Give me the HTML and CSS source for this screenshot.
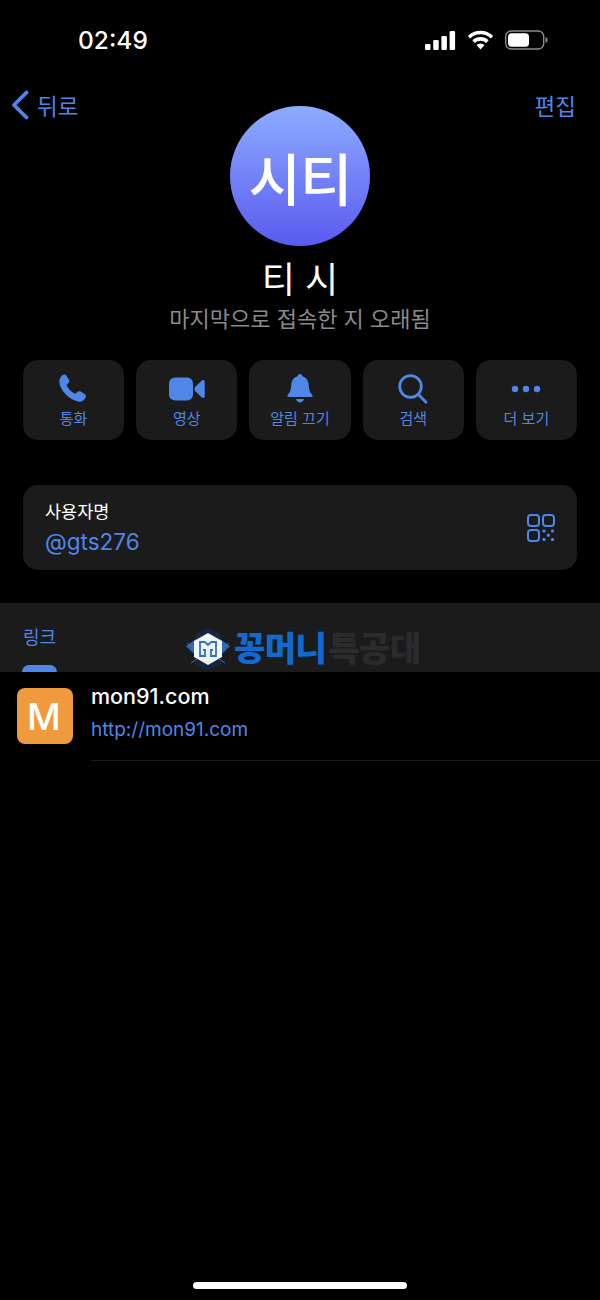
FILE: index.html
```html
<!DOCTYPE html>
<html lang="ko">
<head>
    <meta charset="UTF-8">
    <meta name="viewport" content="width=device-width, initial-scale=1.0">
    <title>티 시</title>
    <link rel="stylesheet" href="styles.css">
</head>
<body>
    <div class="screen">
        <div class="status-bar">
            <span class="time">02:49</span>
            <div class="status-icons">
                <svg width="31" height="19" viewBox="0 0 31 19"><rect x="0" y="13" width="5.5" height="6" rx="1.2"/><rect x="8.2" y="9" width="5.5" height="10" rx="1.2"/><rect x="16.4" y="5" width="5.5" height="14" rx="1.2"/><rect x="24.6" y="0" width="5.5" height="19" rx="1.2"/></svg>
                <svg width="27" height="20" viewBox="0 0 27 20"><path d="M2 7.2a16.5 16.5 0 0 1 23 0" class="wifi-arc"/><path d="M6.6 11.6a10 10 0 0 1 13.8 0" class="wifi-arc"/><path d="M13.5 19.5l-4-4.4a5.6 5.6 0 0 1 8 0z"/></svg>
                <svg width="43" height="20" viewBox="0 0 43 20"><rect x="0.7" y="1" width="38" height="18" rx="5.5" class="batt-frame"/><rect x="3" y="3.2" width="21" height="13.6" rx="3.6"/><path d="M40.5 7v6c1.4-.4 2.2-1.6 2.2-3s-.8-2.6-2.2-3z" class="batt-cap"/></svg>
            </div>
        </div>

        <div class="top-row">
            <a class="nav-link back">
                <svg width="20" height="30" viewBox="0 0 20 30"><path d="M16.5 2.5L4 15l12.5 12.5" class="chevron"/></svg>
                뒤로
            </a>
            <div class="avatar">시티</div>
            <a class="nav-link edit">편집</a>
        </div>

        <h1 class="name">티 시</h1>
        <p class="last-seen">마지막으로 접속한 지 오래됨</p>

        <div class="actions">
            <div class="action">
                <svg width="30" height="30" viewBox="3 0.5 29 29"><path d="M7.2 1.2c1-.5 2.2-.2 2.9.8l2.5 4c.6 1 .5 2.1-.3 2.9l-1.5 1.6c-.4.4-.4.9-.2 1.4 1.6 3.2 4.1 5.8 7.3 7.5.5.2 1 .2 1.4-.2l1.7-1.5c.9-.7 2-.8 3-.2l4 2.500c1 .7 1.300 1.900.8 2.900-1.200 2.700-3.700 4.800-6.800 4.400C12.500 25.500 3.800 15.800 3.300 8.300 3.100 5.300 4.700 2.700 7.200 1.200z"/></svg>
                <span>통화</span>
            </div>
            <div class="action">
                <svg width="36" height="24" viewBox="0 0 36 24"><rect x="0" y="0.5" width="24" height="23" rx="6"/><path d="M26.5 9.5l6.5-6c1-.9 2.700-.3 2.700 1.200v14.600c0 1.500-1.700 2.100-2.700 1.200l-6.500-6c-.6-.5-.9-1.200-.9-2.500s.3-2 .9-2.500z"/></svg>
                <span>영상</span>
            </div>
            <div class="action">
                <svg width="26" height="30" viewBox="0 0 26 30"><path d="M13 0c1.300 0 2.200.9 2.300 2.200 4 1 6.200 4.200 6.400 8.300.2 4.800 1 7.800 3.300 10 .9.900.6 2.500-.9 2.500H1.900C.4 23-.1 21.400.9 20.500c2.300-2.200 3.200-5.200 3.400-10C4.500 6.400 6.700 3.200 10.700 2.200 10.800.9 11.700 0 13 0z"/><path d="M9 25h8c-.6 2.200-2.200 3.500-4 3.500S9.600 27.200 9 25z"/></svg>
                <span>알림 끄기</span>
            </div>
            <div class="action">
                <svg width="30" height="30" viewBox="0 0 30 30"><circle cx="12.5" cy="12.5" r="10.8" class="stroke-icon"/><path d="M20.5 20.5l7.5 7.8" class="stroke-icon"/></svg>
                <span>검색</span>
            </div>
            <div class="action">
                <svg width="30" height="8" viewBox="0 0 30 8" class="dots"><circle cx="4" cy="4" r="3.2"/><circle cx="15" cy="4" r="3.2"/><circle cx="26" cy="4" r="3.2"/></svg>
                <span>더 보기</span>
            </div>
        </div>

        <div class="username-card">
            <div>
                <div class="username-label">사용자명</div>
                <div class="username-value">@gts276</div>
            </div>
            <svg width="28" height="28" viewBox="0 0 28 28">
                <rect x="1" y="1" width="11" height="11" rx="3" class="qr-box"/>
                <rect x="16" y="1" width="11" height="11" rx="3" class="qr-box"/>
                <rect x="1" y="16" width="11" height="11" rx="3" class="qr-box"/>
                <rect x="15.5" y="15.5" width="3" height="3" rx="1"/>
                <rect x="24" y="15.5" width="3" height="3" rx="1"/>
                <rect x="19.8" y="19.8" width="3" height="3" rx="1"/>
                <rect x="15.5" y="24" width="3" height="3" rx="1"/>
                <rect x="24" y="24" width="3" height="3" rx="1"/>
            </svg>
        </div>

        <div class="links-panel">
            <div class="links-title">링크</div>
            <div class="links-tab"></div>
            <!-- 워터마크 -->
            <div class="watermark">
                <svg width="46" height="44" viewBox="0 0 46 44">
                    <path d="M2 16l14 10M44 16L30 26M6 36l12-8M40 36l-12-8" class="wm-line"/>
                    <path d="M1 19l10-7 2 11-5 3zM45 19l-10-7-2 11 5 3z" class="wm-wing"/>
                    <path d="M23 1l13 6v5H10V7z" class="wm-dark"/>
                    <path d="M23 43l-13-5v-4h26v4z" class="wm-dark"/>
                    <path d="M23 6l14 8v16l-14 8-14-8V14z" class="wm-hex"/>
                    <path d="M20 15h-5v14h5v-6h-2M26 15h5v14h-5v-6h2M20 15l3 3 3-3" class="wm-mark"/>
                </svg>
                <span class="wm-blue">꽁머니</span><span class="wm-gray">특공대</span>
            </div>
        </div>

        <div class="link-row">
            <div class="link-icon">M</div>
            <div class="link-text">
                <div class="link-title">mon91.com</div>
                <div class="link-url">http://mon91.com</div>
            </div>
        </div>

        <div class="home-bar"></div>
    </div>
</body>
</html>
```

FILE: styles.css
```css
* {
    box-sizing: border-box;
}
html, body {
    margin: 0;
    padding: 0;
    background-color: #000;
}
body {
    font-family: Inter, "Noto Sans CJK KR", sans-serif;
    color: #fff;
}
h1, p {
    margin: 0;
}
.screen {
    width: 600px;
    height: 1300px;
    display: flex;
    flex-direction: column;
    overflow: hidden;
}

.status-bar {
    height: 81px;
    padding: 26px 52px 0 78px;
    display: flex;
    justify-content: space-between;
    align-items: flex-start;
}
.time {
    font-family: Inter, sans-serif;
    font-size: 24.5px;
    font-weight: 500;
    line-height: 29px;
}
.status-icons {
    display: flex;
    align-items: center;
    gap: 11px;
    padding-top: 4px;
}
.status-icons svg {
    fill: #fff;
    display: block;
}
.wifi-arc {
    fill: none;
    stroke: #fff;
    stroke-width: 3.6;
}
.batt-frame {
    fill: none;
    stroke: #8a8a8a;
    stroke-width: 1.4;
}
.batt-cap {
    fill: #8a8a8a;
}

.top-row {
    height: 165px;
    display: grid;
    grid-template-columns: 1fr 140px 1fr;
    align-items: start;
}
.nav-link {
    display: flex;
    align-items: center;
    gap: 7px;
    height: 48px;
    color: #4f86e8;
    font-size: 22.5px;
}
.back {
    margin-left: 10px;
}
.edit {
    justify-self: end;
    margin-right: 24px;
}
.chevron {
    fill: none;
    stroke: #4f86e8;
    stroke-width: 3.8;
    stroke-linecap: round;
    stroke-linejoin: round;
}
.avatar {
    width: 140px;
    height: 140px;
    margin-top: 25px;
    border-radius: 50%;
    background: linear-gradient(#8dacff, #5a5af0);
    display: flex;
    align-items: center;
    justify-content: center;
    font-size: 57px;
    font-weight: 500;
    letter-spacing: -1px;
}

.name {
    height: 50px;
    margin-top: 9px;
    text-align: center;
    font-size: 36px;
    font-weight: 400;
    line-height: 50px;
}
.last-seen {
    height: 28px;
    text-align: center;
    color: #8a8a8d;
    font-size: 22px;
    line-height: 28px;
}

.actions {
    margin: 27px 23px 0;
    display: grid;
    grid-template-columns: repeat(5, 1fr);
    gap: 12px;
}
.action {
    height: 80px;
    padding-top: 14px;
    background-color: #1b1b1c;
    border-radius: 15px;
    display: flex;
    flex-direction: column;
    align-items: center;
    color: #4f86e8;
    font-size: 15px;
}
.action svg {
    height: 30px;
    fill: #4f86e8;
    flex: none;
}
.action span {
    margin-top: 4px;
    line-height: 22px;
}
.stroke-icon {
    fill: none;
    stroke: #4f86e8;
    stroke-width: 2.8;
    stroke-linecap: round;
}

.username-card {
    height: 85px;
    margin: 45px 23px 0;
    padding: 0 22px;
    background-color: #1b1b1c;
    border-radius: 15px;
    display: flex;
    justify-content: space-between;
    align-items: center;
}
.username-label {
    font-size: 17.5px;
    line-height: 26px;
}
.username-value {
    color: #4f86e8;
    font-family: Inter, sans-serif;
    font-size: 22.5px;
    line-height: 30px;
    margin-top: 2px;
}
.username-card svg {
    fill: #4f86e8;
}
.qr-box {
    fill: none;
    stroke: #4f86e8;
    stroke-width: 2;
}

.links-panel {
    position: relative;
    height: 69px;
    margin-top: 33px;
    padding: 21px 23px 0;
    background-color: #1b1b1c;
    overflow: hidden;
}
.links-title {
    color: #4f86e8;
    font-size: 18px;
    line-height: 28px;
}
.links-tab {
    width: 35px;
    height: 20px;
    margin-top: 13px;
    margin-left: -1px;
    background-color: #4f86e8;
    border-radius: 7px;
}
.watermark {
    position: absolute;
    left: 185px;
    top: 24px;
    display: flex;
    align-items: center;
    font-size: 34px;
    font-weight: 900;
    line-height: 44px;
    letter-spacing: -0.5px;
}
.watermark svg {
    margin-right: 3px;
}
.wm-blue {
    color: #0f6bd2;
}
.wm-gray {
    margin-left: 2px;
    color: #2b2b2d;
}
.wm-line {
    fill: none;
    stroke: #3a6ea8;
    stroke-width: 1;
}
.wm-wing {
    fill: #2f6bb0;
}
.wm-dark {
    fill: #16263c;
}
.wm-hex {
    fill: #f2f5f9;
}
.wm-mark {
    fill: none;
    stroke: #2a73c4;
    stroke-width: 1.8;
}

.link-row {
    height: 89px;
    padding-left: 17px;
    display: flex;
}
.link-icon {
    width: 56px;
    height: 56px;
    margin-top: 16px;
    padding-right: 2px;
    background-color: #f09a3e;
    border-radius: 8px;
    display: flex;
    align-items: center;
    justify-content: center;
    font-family: Inter, sans-serif;
    font-size: 37px;
    font-weight: 500;
    flex: none;
}
.link-text {
    flex: 1;
    margin-left: 18px;
    padding-top: 10px;
    border-bottom: 1px solid #1b1b1c;
}
.link-title {
    font-size: 21.5px;
    font-weight: 500;
    line-height: 28px;
}
.link-url {
    margin-top: 6px;
    color: #4f86e8;
    font-size: 19px;
    line-height: 28px;
}

.home-bar {
    width: 214px;
    height: 7px;
    margin: 521px auto 0;
    background-color: #fff;
    border-radius: 4px;
    flex: none;
}
```
